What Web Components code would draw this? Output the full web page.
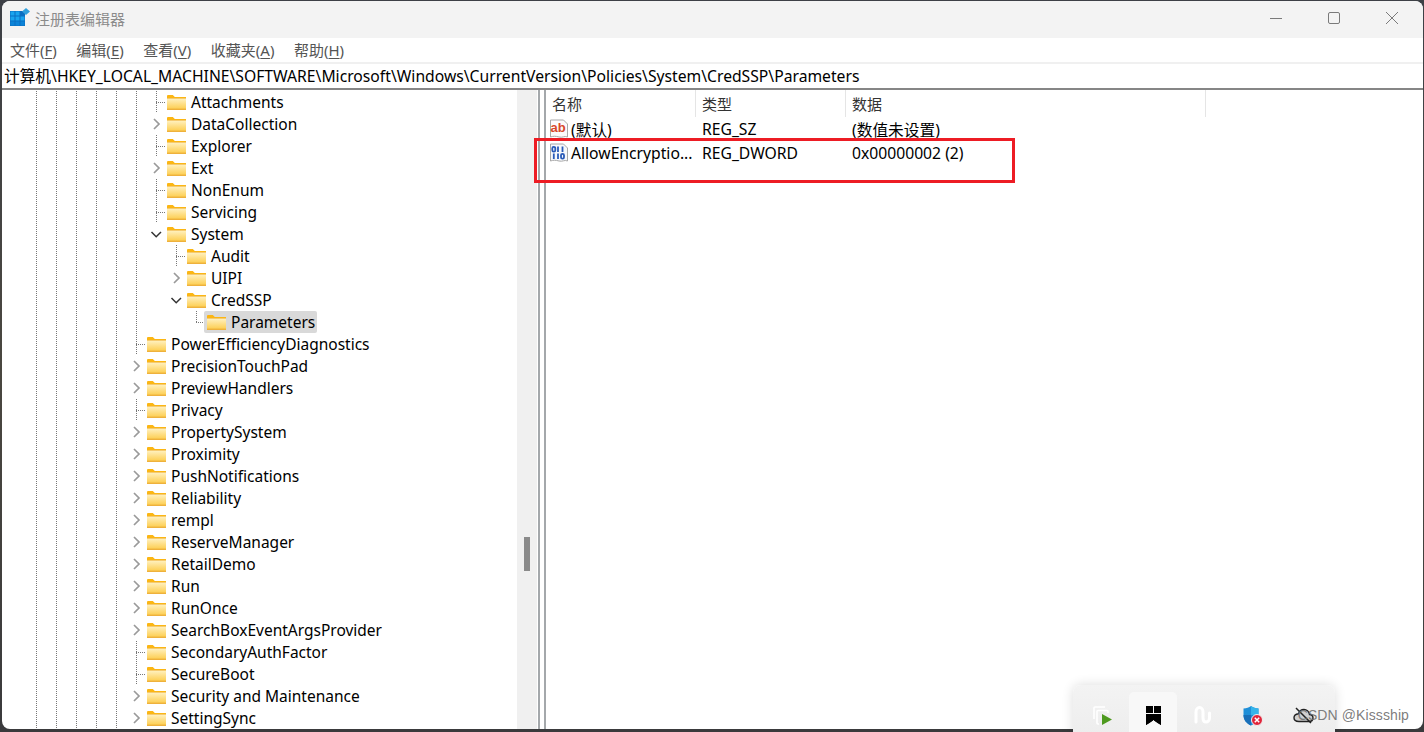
<!DOCTYPE html>
<html lang="zh">
<head>
<meta charset="utf-8">
<title>注册表编辑器</title>
<style>
  html, body { margin: 0; height: 100%; }
  body {
    height: 732px;
    overflow: hidden;
    background: linear-gradient(180deg, #3d4046 0, #4a4740 50%, #3a3a3c 100%);
    font-family: "Noto Sans", "Noto Sans CJK SC", sans-serif;
  }
</style>
</head>
<body>
<reg-window>
  <reg-titlebar slot="title">注册表编辑器</reg-titlebar>
  <reg-menubar slot="menu">
    <reg-menu key="F">文件</reg-menu>
    <reg-menu key="E">编辑</reg-menu>
    <reg-menu key="V">查看</reg-menu>
    <reg-menu key="A">收藏夹</reg-menu>
    <reg-menu key="H">帮助</reg-menu>
  </reg-menubar>
  <reg-address slot="address">计算机\HKEY_LOCAL_MACHINE\SOFTWARE\Microsoft\Windows\CurrentVersion\Policies\System\CredSSP\Parameters</reg-address>
  <reg-tree slot="tree">
    <reg-row cells="ggggggl">Attachments</reg-row>
    <reg-row cells="ggggggc">DataCollection</reg-row>
    <reg-row cells="ggggggl">Explorer</reg-row>
    <reg-row cells="ggggggc">Ext</reg-row>
    <reg-row cells="ggggggl">NonEnum</reg-row>
    <reg-row cells="ggggggl">Servicing</reg-row>
    <reg-row cells="ggggggo">System</reg-row>
    <reg-row cells="gggggg-l">Audit</reg-row>
    <reg-row cells="gggggg-c">UIPI</reg-row>
    <reg-row cells="gggggg-o">CredSSP</reg-row>
    <reg-row cells="gggggg--e" selected>Parameters</reg-row>
    <reg-row cells="gggggl">PowerEfficiencyDiagnostics</reg-row>
    <reg-row cells="gggggc">PrecisionTouchPad</reg-row>
    <reg-row cells="gggggc">PreviewHandlers</reg-row>
    <reg-row cells="gggggl">Privacy</reg-row>
    <reg-row cells="gggggc">PropertySystem</reg-row>
    <reg-row cells="gggggc">Proximity</reg-row>
    <reg-row cells="gggggc">PushNotifications</reg-row>
    <reg-row cells="gggggc">Reliability</reg-row>
    <reg-row cells="gggggc">rempl</reg-row>
    <reg-row cells="gggggc">ReserveManager</reg-row>
    <reg-row cells="gggggc">RetailDemo</reg-row>
    <reg-row cells="gggggc">Run</reg-row>
    <reg-row cells="gggggc">RunOnce</reg-row>
    <reg-row cells="gggggc">SearchBoxEventArgsProvider</reg-row>
    <reg-row cells="gggggl">SecondaryAuthFactor</reg-row>
    <reg-row cells="gggggl">SecureBoot</reg-row>
    <reg-row cells="gggggc">Security and Maintenance</reg-row>
    <reg-row cells="gggggc">SettingSync</reg-row>
  </reg-tree>
  <reg-scrollbar slot="scroll"></reg-scrollbar>
  <reg-list slot="list">
    <reg-value icon="sz" name="(默认)" type="REG_SZ" data="(数值未设置)"></reg-value>
    <reg-value icon="bin" name="AllowEncryptio..." type="REG_DWORD" data="0x00000002 (2)"></reg-value>
  </reg-list>
</reg-window>
<reg-callout></reg-callout>
<reg-tray></reg-tray>
<reg-mark>CSDN @Kissship</reg-mark>

<script>
const FONT = '"Noto Sans", "Noto Sans CJK SC", sans-serif';

class RegWindow extends HTMLElement {
  constructor() {
    super();
    this.attachShadow({ mode: 'open' });
    this.shadowRoot.innerHTML = `
      <style>
        :host {
          display: flex;
          flex-direction: column;
          width: 1421px;
          height: 728px;
          margin: 1px 0 0 2px;
          background: #fff;
          border-radius: 8px;
          overflow: hidden;
          font-family: ${FONT};
        }
        .rule { height: 2px; background: #868686; flex: none; }
        .panes { display: flex; flex: 1; min-height: 0; }
        .splitter {
          flex: none;
          width: 4px;
          border-left: 2px solid #a4a8ab;
          border-right: 2px solid #a4a8ab;
          margin-left: 1px;
        }
      </style>
      <slot name="title"></slot>
      <slot name="menu"></slot>
      <slot name="address"></slot>
      <div class="rule"></div>
      <div class="panes">
        <slot name="tree"></slot>
        <slot name="scroll"></slot>
        <div class="splitter"></div>
        <slot name="list"></slot>
      </div>
    `;
  }
}

class RegTitlebar extends HTMLElement {
  constructor() {
    super();
    this.attachShadow({ mode: 'open' });
    this.shadowRoot.innerHTML = `
      <style>
        :host {
          display: flex;
          align-items: center;
          height: 37px;
          flex: none;
          box-sizing: border-box;
          background: #f3f3f3;
          color: #8b8b8b;
          font-size: 15px;
          padding: 0 2px 3px 8px;
        }
        .app { margin-right: 6px; }
        .name { flex: 1; margin-left: -1px; }
        .btn { width: 58px; display: flex; justify-content: center; }
        .btns { display: flex; }
      </style>
      <svg class="app" width="20" height="20" viewBox="0 0 20 20">
        <rect x="0" y="3" width="15" height="15" fill="#0a6fc2"/>
        <g fill="#19a4ee">
          <rect x="0.5" y="3.5" width="4" height="4"/><rect x="5.5" y="3.5" width="4" height="4"/>
          <rect x="0.5" y="8.5" width="4" height="4"/><rect x="5.5" y="8.5" width="4" height="4"/>
          <rect x="10.5" y="8.5" width="4" height="4"/>
        </g>
        <g fill="#0c84d8">
          <rect x="0.5" y="13.5" width="4" height="4"/><rect x="5.5" y="13.5" width="4" height="4"/>
          <rect x="10.5" y="13.5" width="4" height="4"/>
        </g>
        <path d="M16 0l4 3.5-4 3.5-4-3.5z" fill="#2f9fdc"/>
      </svg>
      <span class="name"><slot></slot></span>
      <div class="btns">
        <span class="btn"><svg width="14" height="14" viewBox="0 0 14 14"><path d="M1 7.5h12" stroke="#7a7a7a" stroke-width="1"/></svg></span>
        <span class="btn"><svg width="14" height="14" viewBox="0 0 14 14"><rect x="1.5" y="1.5" width="11" height="11" rx="1.5" fill="none" stroke="#7a7a7a" stroke-width="1"/></svg></span>
        <span class="btn"><svg width="14" height="14" viewBox="0 0 14 14"><path d="M1 1l12 12M13 1L1 13" stroke="#7a7a7a" stroke-width="1"/></svg></span>
      </div>
    `;
  }
}

class RegMenubar extends HTMLElement {
  constructor() {
    super();
    this.attachShadow({ mode: 'open' });
    this.shadowRoot.innerHTML = `
      <style>
        :host {
          display: flex;
          align-items: center;
          gap: 19.5px;
          height: 22px;
          flex: none;
          padding: 0 0 2px 8px;
          background: #fff;
          border-bottom: 2px solid #f0f0f0;
          color: #555;
          font-size: 15px;
        }
      </style>
      <slot></slot>
    `;
  }
}

class RegMenu extends HTMLElement {
  constructor() {
    super();
    this.attachShadow({ mode: 'open' });
    this.shadowRoot.innerHTML = `
      <style>
        :host { display: block; white-space: nowrap; }
        u { text-underline-offset: 2px; }
      </style>
      <slot></slot>(<u>${this.getAttribute('key')}</u>)
    `;
  }
}

class RegAddress extends HTMLElement {
  constructor() {
    super();
    this.attachShadow({ mode: 'open' });
    this.shadowRoot.innerHTML = `
      <style>
        :host {
          display: flex;
          align-items: center;
          height: 24px;
          flex: none;
          box-sizing: border-box;
          padding: 0 0 2px 2px;
          color: #000;
          font-size: 15.7px;
          white-space: nowrap;
        }
      </style>
      <slot></slot>
    `;
  }
}

class RegTree extends HTMLElement {
  constructor() {
    super();
    this.attachShadow({ mode: 'open' });
    this.shadowRoot.innerHTML = `
      <style>
        :host {
          display: block;
          flex: none;
          width: 515px;
          padding: 1px 0 0 24px;
          box-sizing: border-box;
          overflow: hidden;
        }
      </style>
      <slot></slot>
    `;
  }
}

const FOLDER = `
  <svg class="folder" width="19" height="15" viewBox="0 0 19 15">
    <defs>
      <linearGradient id="fb" x1="0" y1="0" x2="0" y2="1">
        <stop offset="0" stop-color="#fff1c0"/><stop offset="1" stop-color="#fdcf55"/>
      </linearGradient>
    </defs>
    <path d="M0 1.2C0 .5.5 0 1.2 0h4.6l2 2H19v2H0z" fill="#fbb614"/>
    <rect y="3" width="19" height="12" fill="#eeb13c"/>
    <rect y="3.6" width="19" height="10" fill="url(#fb)"/>
  </svg>`;

const CHEVRONS = {
  c: '<svg width="20" height="22" viewBox="0 0 20 22"><path d="M8 6l5 5-5 5" fill="none" stroke="#9a9a9a" stroke-width="1.7"/></svg>',
  o: '<svg width="20" height="22" viewBox="0 0 20 22"><path d="M5.5 9l4.7 4.7L15 9" fill="none" stroke="#333" stroke-width="1.5"/></svg>'
};

class RegRow extends HTMLElement {
  constructor() {
    super();
    this.attachShadow({ mode: 'open' });
    const cells = [...this.getAttribute('cells')].map(c => {
      return `<span class="cell ${c === '-' ? '' : c}">${CHEVRONS[c] || ''}</span>`;
    }).join('');
    this.shadowRoot.innerHTML = `
      <style>
        :host {
          display: flex;
          height: 22px;
          color: #000;
          font-size: 15.5px;
          line-height: 20px;
          white-space: nowrap;
        }
        .cell {
          flex: none;
          width: 20px;
          height: 22px;
          --v: repeating-linear-gradient(to bottom, #777 0 1px, transparent 1px 2px);
          --h: repeating-linear-gradient(to right, #777 0 1px, transparent 1px 2px);
          background-repeat: no-repeat;
        }
        .g { background-image: var(--v); background-size: 1px 22px; background-position: 10px 0; }
        .l {
          background-image: var(--v), var(--h);
          background-size: 1px 22px, 10px 1px;
          background-position: 10px 0, 10px 11px;
        }
        .e {
          background-image: var(--v), var(--h);
          background-size: 1px 12px, 8px 1px;
          background-position: 10px 0, 10px 11px;
        }
        .item {
          display: flex;
          align-items: center;
          gap: 5px;
          height: 22px;
          margin-left: -2px;
          padding: 0 2px 0 3px;
          border-radius: 2px;
        }
        :host([selected]) .item { background: #d9d9d9; }
        svg { display: block; }
      </style>
      ${cells}
      <div class="item">${FOLDER}<span><slot></slot></span></div>
    `;
  }
}

class RegScrollbar extends HTMLElement {
  constructor() {
    super();
    this.attachShadow({ mode: 'open' });
    this.shadowRoot.innerHTML = `
      <style>
        :host {
          display: block;
          flex: none;
          width: 20px;
          background: #f0f0f0;
          padding: 447px 0 0 7px;
          box-sizing: border-box;
        }
        .thumb { width: 6px; height: 34px; background: #8a8a8a; }
      </style>
      <div class="thumb"></div>
    `;
  }
}

class RegList extends HTMLElement {
  constructor() {
    super();
    this.attachShadow({ mode: 'open' });
    this.shadowRoot.innerHTML = `
      <style>
        :host {
          display: block;
          flex: 1;
          font-size: 15.7px;
          color: #222;
        }
        .head { display: flex; height: 27px; font-size: 15px; }
        .col {
          display: flex;
          align-items: center;
          box-sizing: border-box;
          padding-left: 6px;
          border-right: 1px solid #e5e5e5;
          color: #333;
        }
      </style>
      <div class="head">
        <div class="col" style="width:150px">名称</div>
        <div class="col" style="width:150px">类型</div>
        <div class="col" style="width:360px">数据</div>
      </div>
      <slot></slot>
    `;
  }
}

const VALUE_ICONS = {
  sz: `<svg width="20" height="20" viewBox="0 0 20 20">
    <path d="M1.5 1h13l4 4v13c-3-1.500-5 1-8.500 0s-5.500-1-8.500 0z" fill="#fbfbfb" stroke="#a8a8a8"/>
    <text x="1.500" y="13" font-family="Liberation Sans, sans-serif" font-size="13" font-weight="700" fill="#d8482a">ab</text>
  </svg>`,
  bin: `<svg width="20" height="20" viewBox="0 0 20 20">
    <path d="M1.500 1h13l4 4v13c-3-1.500-5 1-8.500 0s-5.500-1-8.500 0z" fill="#f6f8fc" stroke="#a8a8a8"/>
    <g fill="none" stroke="#2a5bb8" stroke-width="1.800">
      <rect x="3.300" y="3.800" width="3" height="4.800" rx="1.400"/>
      <path d="M9 3.500v5.500M13.500 3.500v5.500M4.800 10.500v5.500M9 10.500v5.500"/>
      <rect x="12" y="10.800" width="3" height="4.800" rx="1.400"/>
    </g>
  </svg>`
};

class RegValue extends HTMLElement {
  constructor() {
    super();
    this.attachShadow({ mode: 'open' });
    this.shadowRoot.innerHTML = `
      <style>
        :host {
          display: flex;
          align-items: center;
          height: 24px;
          white-space: nowrap;
          color: #000;
        }
        .name { display: flex; align-items: center; gap: 2px; width: 150px; box-sizing: border-box; padding-left: 3px; }
        .type { width: 150px; box-sizing: border-box; padding-left: 6px; }
        .data { padding-left: 6px; }
        svg { display: block; }
      </style>
      <div class="name">${VALUE_ICONS[this.getAttribute('icon')]}<span>${this.getAttribute('name')}</span></div>
      <div class="type">${this.getAttribute('type')}</div>
      <div class="data">${this.getAttribute('data')}</div>
    `;
  }
}

// the red frame somebody drew on the screenshot
class RegCallout extends HTMLElement {
  constructor() {
    super();
    this.attachShadow({ mode: 'open' });
    this.shadowRoot.innerHTML = `
      <style>
        :host {
          position: absolute;
          left: 534px;
          top: 138px;
          width: 481px;
          height: 45px;
          box-sizing: border-box;
          border: 3px solid #ed1c24;
        }
      </style>
    `;
  }
}

class RegTray extends HTMLElement {
  constructor() {
    super();
    this.attachShadow({ mode: 'open' });
    this.shadowRoot.innerHTML = `
      <style>
        :host {
          position: absolute;
          left: 1073px;
          top: 685px;
          width: 262px;
          height: 60px;
          box-sizing: border-box;
          display: flex;
          gap: 2px;
          padding: 7px 8px 0 6px;
          background: linear-gradient(180deg, #f3f3f3, #ececec);
          border-radius: 8px;
          box-shadow: 0 0 12px rgba(0, 0, 0, .14);
        }
        .slot {
          flex: none;
          width: 48px;
          height: 53px;
          display: flex;
          justify-content: center;
          padding-top: 14px;
          box-sizing: border-box;
          border-radius: 5px 5px 0 0;
        }
        .on { background: #f8f8f8; }
        svg { display: block; }
      </style>
      <div class="slot">
        <svg width="20" height="20" viewBox="0 0 20 20">
          <path d="M1 13V2c0-.6.4-1 1-1h10" fill="none" stroke="#fff" stroke-width="1.600"/>
          <path d="M6 18H5c-.6 0-1-.4-1-1V5.500c0-.6.4-1 1-1h9c.6 0 1 .4 1 1V7" fill="none" stroke="#fff" stroke-width="1.600"/>
          <path d="M9 8l10 5.500L9 19z" fill="#4e9a1f"/>
        </svg>
      </div>
      <div class="slot on">
        <svg width="15" height="19" viewBox="0 0 15 19">
          <rect x="0" y="0" width="7" height="7" fill="#000"/>
          <rect x="8" y="0" width="7" height="7" fill="#000"/>
          <path d="M0 8h7v6.500L3.500 17 0 19zM8 8h7v11l-3.500-2L8 14.500z" fill="#000"/>
          <path d="M0 8h15v7l0 4-7.500-5L0 19z" fill="#000"/>
        </svg>
      </div>
      <div class="slot">
        <svg width="18" height="18" viewBox="0 0 18 18">
          <path d="M2 16V6c0-2.800 1.600-4.500 3.500-4.500S9 3.200 9 6v6c0 2.500 1.200 4 3 4s3.500-1.500 3.500-4V7" fill="none" stroke="#fff" stroke-width="3" stroke-linecap="round"/>
        </svg>
      </div>
      <div class="slot">
        <svg width="20" height="20" viewBox="0 0 20 20">
          <path d="M8 0c2 1.600 4.500 2.400 7.500 2.500V9c0 5-3 8.500-7.500 10.500C3.500 17.500.5 14 .5 9V2.500C3.500 2.400 6 1.600 8 0z" fill="#1f8fd8"/>
          <path d="M8 0c2 1.600 4.500 2.400 7.500 2.500V9H8z" fill="#35b4ea"/>
          <path d="M8 9H.5c0 5 3 8.500 7.500 10.500z" fill="#1a6fb8"/>
          <circle cx="14" cy="14" r="5.500" fill="#e0243a" stroke="#f0f0f0"/>
          <path d="M11.800 11.800l4.400 4.400m0-4.400l-4.400 4.400" stroke="#fff" stroke-width="1.500"/>
        </svg>
      </div>
      <div class="slot" style="padding-top:15px">
        <svg width="21" height="17" viewBox="0 0 21 17">
          <path d="M6 14.500h10c2.300 0 4-1.500 4-3.500s-1.600-3.400-3.500-3.500C16 4.500 13.500 2.500 11 2.500c-2.700 0-4.800 1.800-5.500 4.200C3 7 1 8.600 1 10.800s2 3.700 5 3.700z" fill="#cfcfcf" stroke="#222" stroke-width="1.400"/>
          <path d="M3 1l15 15" stroke="#222" stroke-width="1.500"/>
        </svg>
      </div>
    `;
  }
}

class RegMark extends HTMLElement {
  constructor() {
    super();
    this.attachShadow({ mode: 'open' });
    this.shadowRoot.innerHTML = `
      <style>
        :host {
          position: absolute;
          right: 15px;
          top: 707px;
          font-family: "Liberation Sans", sans-serif;
          font-size: 14px;
          letter-spacing: .1px;
          line-height: 16px;
          color: rgba(110, 110, 110, .9);
          white-space: nowrap;
        }
      </style>
      <slot></slot>
    `;
  }
}

customElements.define('reg-window', RegWindow);
customElements.define('reg-titlebar', RegTitlebar);
customElements.define('reg-menubar', RegMenubar);
customElements.define('reg-menu', RegMenu);
customElements.define('reg-address', RegAddress);
customElements.define('reg-tree', RegTree);
customElements.define('reg-row', RegRow);
customElements.define('reg-scrollbar', RegScrollbar);
customElements.define('reg-list', RegList);
customElements.define('reg-value', RegValue);
customElements.define('reg-callout', RegCallout);
customElements.define('reg-tray', RegTray);
customElements.define('reg-mark', RegMark);
</script>
</body>
</html>
